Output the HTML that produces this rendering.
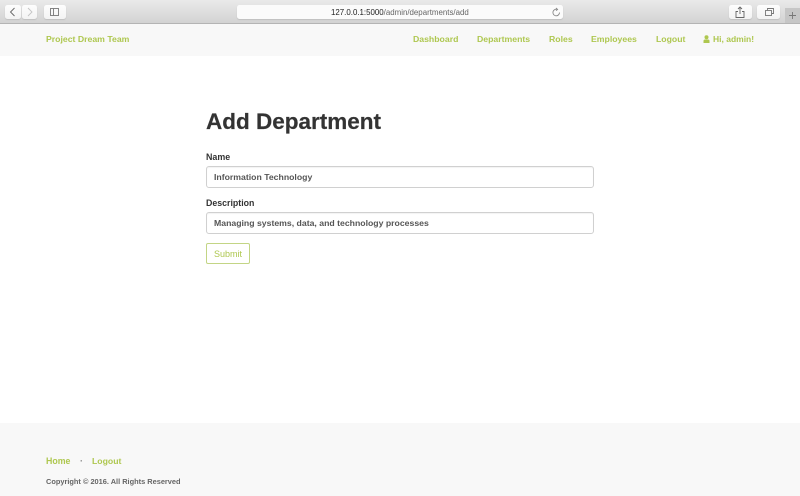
<!DOCTYPE html>
<html><head><meta charset="utf-8"><style>
html,body{margin:0;padding:0;width:800px;height:496px;overflow:hidden;background:#fff;font-family:"Liberation Sans",sans-serif}
#w{position:absolute;left:0;top:0;width:800px;height:496px;filter:blur(.33px)}
.a{position:absolute;white-space:nowrap}
.nav{font-size:8.7px;font-weight:bold;color:#aec74f;top:33px;line-height:12px}
.btn{position:absolute;top:5px;height:14px;background:linear-gradient(#fdfdfd,#f3f3f3);border-radius:2.5px;box-shadow:0 1px 1px rgba(0,0,0,.1)}
.lbl{font-size:8.9px;font-weight:bold;color:#333;left:206px;line-height:12px}
.inp{position:absolute;left:206px;width:386px;height:20px;border:1px solid #d0d0d0;border-radius:3px;background:#fff;box-shadow:inset 0 1px 1px rgba(0,0,0,.05);font-size:8.7px;font-weight:bold;color:#555;line-height:21px;text-indent:7px}
</style></head><body><div id="w">
<div class="a" style="left:0;top:0;width:800px;height:23px;background:linear-gradient(#e9e9e9,#d2d2d2);border-bottom:1px solid #b4b4b4"></div>
<div class="btn" style="left:5px;width:16px"></div>
<div class="btn" style="left:22px;width:15px"></div>
<div class="btn" style="left:44px;width:22px"></div>
<div class="btn" style="left:237px;width:326px;background:#fbfbfb"></div>
<div class="btn" style="left:729px;width:23px"></div>
<div class="btn" style="left:757px;width:23px"></div>
<div class="a" style="left:785px;top:8px;width:15px;height:15px;background:#c6c6c6"></div>
<svg class="a" style="left:0;top:0" width="800" height="24" fill="none" stroke="#777" stroke-width=".9">
<path d="M14.5 8 L10.5 12 L14.5 16" stroke="#666"/>
<path d="M28 8 L32 12 L28 16" stroke="#c4c4c4"/>
<rect x="50.5" y="8.5" width="8" height="7"/><path d="M53.5 8.5V15.5"/>
<path d="M557.5 9.5 A3.3 3.3 0 1 0 559.5 12.5" stroke="#888"/><path d="M556 8l1.6 1.5-1.6 1.2" stroke="#888"/>
<path d="M738 11.5h-2v6h8v-6h-2M740 14V7.5M738 9l2-2 2 2" stroke="#666"/>
<rect x="765.5" y="10.5" width="6" height="5"/><path d="M767.5 10.5v-2h6v5h-2"/>
<path d="M792.5 12v7M789 15.5h7" stroke="#777"/>
</svg>
<div class="a" style="left:331px;top:6.5px;font-size:7.9px;line-height:12px;color:#666"><span style="color:#222">127.0.0.1:5000</span>/admin/departments/add</div>

<div class="a" style="left:0;top:24px;width:800px;height:32px;background:#f8f8f8"></div>
<div class="a nav" style="left:46px">Project Dream Team</div>
<div class="a nav" style="left:413px">Dashboard</div>
<div class="a nav" style="left:477px">Departments</div>
<div class="a nav" style="left:549px">Roles</div>
<div class="a nav" style="left:591px">Employees</div>
<div class="a nav" style="left:656px">Logout</div>
<svg class="a" style="left:703px;top:34.5px" width="7" height="9"><circle cx="3.5" cy="2.2" r="2" fill="#aec74f"/><path d="M0.5 8V6Q0.5 4.5 2 4.5H5Q6.5 4.5 6.5 6V8Z" fill="#aec74f"/></svg>
<div class="a nav" style="left:713px;font-size:8.5px">Hi, admin!</div>

<div class="a" style="left:206px;top:106.5px;font-size:22.5px;font-weight:bold;color:#333;line-height:30px;-webkit-text-stroke:.2px #333">Add Department</div>
<div class="a lbl" style="top:151px">Name</div>
<div class="inp" style="top:166px">Information Technology</div>
<div class="a lbl" style="top:197px;font-size:8.8px">Description</div>
<div class="inp" style="top:212px">Managing systems, data, and technology processes</div>
<div class="a" style="left:206px;top:243px;width:42px;height:19px;border:1px solid #c3d585;border-radius:2px;font-size:9px;color:#aec74f;text-align:center;line-height:20px">Submit</div>

<div class="a" style="left:0;top:423px;width:800px;height:73px;background:#f8f8f8"></div>
<div class="a" style="left:46px;top:455px;font-size:8.8px;font-weight:bold;color:#aec74f;line-height:12px">Home</div>
<div class="a" style="left:80px;top:455px;font-size:9px;font-weight:bold;color:#888;line-height:12px">·</div>
<div class="a" style="left:92px;top:455px;font-size:8.7px;font-weight:bold;color:#aec74f;line-height:12px">Logout</div>
<div class="a" style="left:46px;top:476px;font-size:7.4px;font-weight:bold;color:#666;line-height:11px">Copyright © 2016. All Rights Reserved</div>
</div></body></html>
